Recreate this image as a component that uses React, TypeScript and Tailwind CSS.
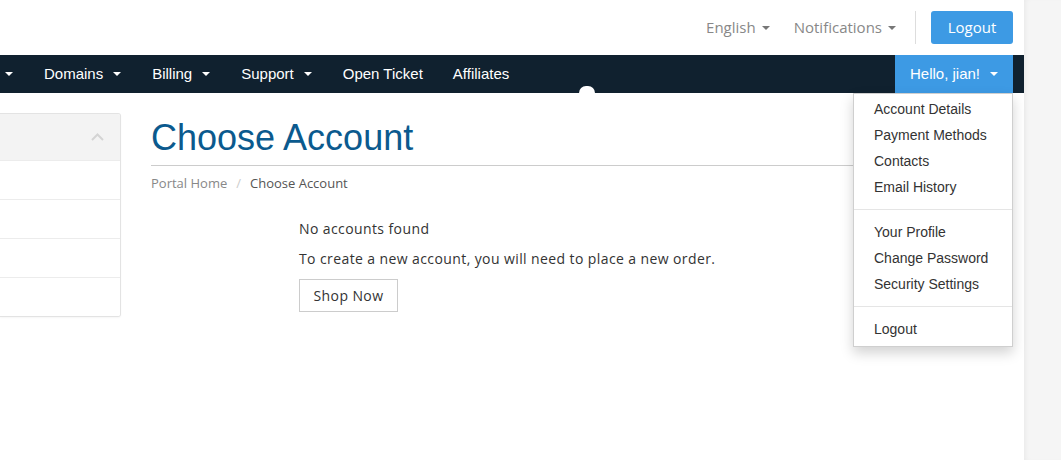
import React from 'react';

const montserrat = { fontFamily: '"Open Sans", "Noto Sans", sans-serif' };

const Caret: React.FC<{ className?: string }> = ({ className }) => (
  <svg width="8" height="4" viewBox="0 0 8 4" className={className}>
    <path d="M0 0h8L4 4z" fill="currentColor" />
  </svg>
);

const navItems = [
  { label: 'Domains', caret: true },
  { label: 'Billing', caret: true },
  { label: 'Support', caret: true },
  { label: 'Open Ticket', caret: false },
  { label: 'Affiliates', caret: false },
];

const menuGroups = [
  ['Account Details', 'Payment Methods', 'Contacts', 'Email History'],
  ['Your Profile', 'Change Password', 'Security Settings'],
  ['Logout'],
];

const App: React.FC = () => {
  return (
    <div className="flex h-[460px] w-full overflow-hidden bg-white">
      <div className="relative w-[1024px] shrink-0">
        {/* Top header */}
        <div className="flex h-[55px] items-center justify-end pr-[11px]" style={montserrat}>
          <div className="flex items-center gap-[6px] text-[15px] text-[#888]">
            English <Caret className="text-[#777]" />
          </div>
          <div className="ml-[24px] flex items-center gap-[6px] text-[15px] text-[#888]">
            Notifications <Caret className="text-[#777]" />
          </div>
          <div className="ml-[19px] h-[33px] w-px bg-[#dddddd]" />
          <button className="ml-[15px] h-[33px] w-[82px] rounded-[3px] bg-[#3d9ae4] text-[15px] text-white">
            Logout
          </button>
        </div>

        {/* Navbar */}
        <div
          className="relative flex h-[38px] items-center bg-[#10212f] pr-[11px] text-[15px] text-white"
          style={{ fontFamily: '"Liberation Sans", Arial, sans-serif' }}
        >
          <Caret className="ml-[5px]" />
          <div className="ml-[16px] flex items-center">
            {navItems.map(item => (
              <div key={item.label} className="flex items-center gap-[10px] px-[15px]">
                {item.label}
                {item.caret && <Caret className="mr-px" />}
              </div>
            ))}
          </div>
          <div className="ml-auto flex h-full w-[118px] items-center justify-center gap-[10px] bg-[#3d9ae4]">
            Hello, jian! <Caret />
          </div>
          <div className="absolute bottom-0 left-[579px] h-[7px] w-[16px] rounded-t-full bg-white" />
        </div>

        {/* Body */}
        <div className="flex pt-[20px]">
          <div className="w-[121px] shrink-0">
            <div className="overflow-hidden rounded-tr-[3px] rounded-br-[3px] border border-l-0 border-[#e3e3e3] shadow-[0_1px_2px_rgba(0,0,0,0.04)]">
              <div className="flex h-[46px] items-center justify-end bg-[#f3f3f3] pr-[16px]">
                <svg width="13" height="8" viewBox="0 0 13 8">
                  <path d="M1 7l5.5-5.5L12 7" fill="none" stroke="#d4d4d4" strokeWidth="2" />
                </svg>
              </div>
              {[0, 1, 2, 3].map(i => (
                <div key={i} className="h-[39px] border-t border-[#ececec] bg-white" />
              ))}
            </div>
          </div>

          <div className="ml-[30px] flex-1 pr-[11px]">
            <h1
              className="mt-[5px] border-b border-[#cccccc] pb-[7px] text-[36px] leading-[40px] text-[#0b5a8e]"
              style={{ fontFamily: '"Liberation Sans", Arial, sans-serif' }}
            >
              Choose Account
            </h1>
            <div className="mt-[7px] flex items-center text-[13px] leading-[20px]" style={montserrat}>
              <span className="text-[#888]">Portal Home</span>
              <span className="px-[9px] text-[#ccc]">/</span>
              <span className="text-[#555]">Choose Account</span>
            </div>
            <div
              className="mt-[26px] pl-[148px] text-[14px] leading-[20px] tracking-[0.4px] text-[#333]"
              style={montserrat}
            >
              <p>No accounts found</p>
              <p className="mt-[10px]">To create a new account, you will need to place a new order.</p>
              <button className="mt-[10px] h-[33px] w-[99px] border border-[#cccccc] bg-white text-[14px] tracking-[0.4px] text-[#333]">
                Shop Now
              </button>
            </div>
          </div>
        </div>

        {/* Account dropdown */}
        <div
          className="absolute left-[853px] top-[93px] w-[160px] border border-[#cfcfcf] bg-white pb-[4px] pt-[2px] text-[14px] text-[#333] shadow-[0_6px_12px_rgba(0,0,0,0.175)]"
          style={{ fontFamily: '"Liberation Sans", Arial, sans-serif' }}
        >
          {menuGroups.map((group, gi) => (
            <div key={gi}>
              {gi > 0 && <div className="my-[9px] h-px bg-[#e5e5e5]" />}
              {group.map(label => (
                <div key={label} className="px-[20px] leading-[26px]">
                  {label}
                </div>
              ))}
            </div>
          ))}
        </div>
      </div>
      <div className="flex-1 bg-[#f5f5f5] shadow-[inset_4px_0_6px_-4px_rgba(0,0,0,0.08)]" />
    </div>
  );
};

export default App;
